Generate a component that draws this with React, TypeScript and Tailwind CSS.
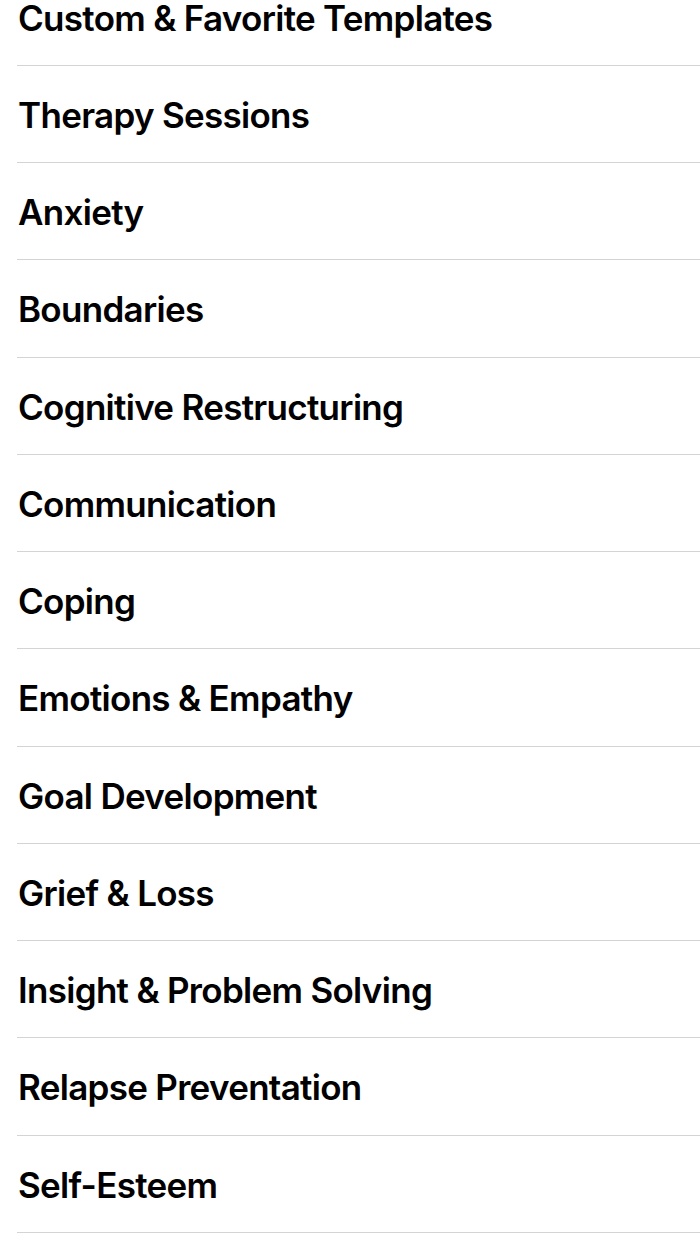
import React from "react";

const items = [
  "Custom & Favorite Templates",
  "Therapy Sessions",
  "Anxiety",
  "Boundaries",
  "Cognitive Restructuring",
  "Communication",
  "Coping",
  "Emotions & Empathy",
  "Goal Development",
  "Grief & Loss",
  "Insight & Problem Solving",
  "Relapse Preventation",
  "Self-Esteem",
];

export default function App() {
  return (
    <div className="h-[1244px] w-[700px] overflow-hidden bg-white" style={{ fontFamily: "Inter, 'Noto Sans', sans-serif" }}>
      <div className="-mt-[31.5px]">
        {items.map((t) => (
          <div key={t} className="ml-[17px] h-[97.25px] flex items-center border-b border-[#d4d4d6]">
            <span className="pl-[1px] pt-[3px] text-[35px] font-semibold text-black leading-none tracking-[-0.7px]">{t}</span>
          </div>
        ))}
      </div>
    </div>
  );
}
